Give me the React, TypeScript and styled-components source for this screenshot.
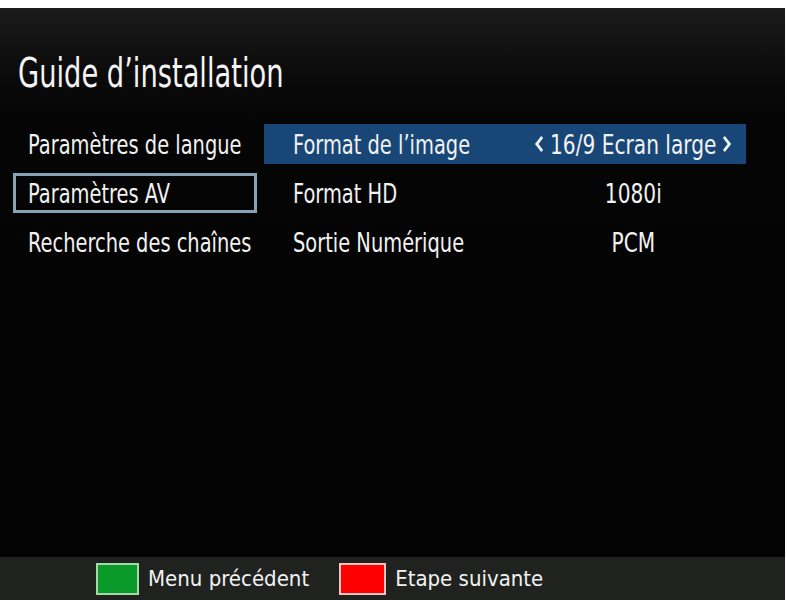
import React from "react";
import styled, { createGlobalStyle } from "styled-components";

const GlobalStyle = createGlobalStyle`
  html, body {
    margin: 0;
    padding: 0;
    background: #ffffff;
  }
  body {
    font-family: "DejaVu Sans Condensed", "DejaVu Sans", sans-serif;
    font-stretch: condensed;
  }
`;

const Screen = styled.div`
  margin-top: 8px;
  width: 785px;
  height: 592px;
  display: flex;
  flex-direction: column;
  background: linear-gradient(180deg, #1b1b1b 0px, #0d0d0d 55px, #050505 110px, #030303 100%);
  color: #f2f2f2;
`;

const Header = styled.div`
  height: 116px;
  box-sizing: border-box;
  padding: 45px 0 0 18px;
`;

// the set-top box font is much narrower than anything installed, so text is squeezed
const Squeeze = styled.span<{ $scale: number; $origin?: string }>`
  display: inline-block;
  white-space: nowrap;
  transform: scaleX(${(p) => p.$scale});
  transform-origin: ${(p) => p.$origin ?? "left"} center;
`;

const Title = styled.h1`
  margin: 0;
  font-weight: normal;
  font-size: 41px;
  line-height: 41px;
  color: #f4f4f4;
`;

const Content = styled.div`
  flex: 1;
  display: grid;
  grid-template-columns: 244px 482px;
  column-gap: 7px;
  padding-left: 13px;
  align-items: start;
`;

const Column = styled.div`
  display: flex;
  flex-direction: column;
  row-gap: 9px;
`;

const MenuItem = styled.div<{ $focused?: boolean }>`
  height: 40px;
  box-sizing: border-box;
  display: flex;
  align-items: center;
  padding-left: ${(p) => (p.$focused ? "12px" : "15px")};
  border: ${(p) => (p.$focused ? "3px solid #8aa3b4" : "none")};
  font-size: 27px;
`;

const SettingRow = styled.div<{ $selected?: boolean }>`
  height: 40px;
  display: grid;
  grid-template-columns: 256px minmax(0, 1fr);
  align-items: center;
  background: ${(p) => (p.$selected ? "#184777" : "transparent")};
  font-size: 27px;
`;

const Label = styled.div`
  padding-left: 29px;
`;

const Value = styled.div`
  display: flex;
  justify-content: center;
`;

const ValueInner = styled.span`
  display: inline-flex;
  align-items: center;
  column-gap: 6px;
`;

const Footer = styled.div`
  height: 43px;
  background: #1f221f;
  display: flex;
  align-items: center;
  padding-left: 96px;
  column-gap: 30px;
`;

const Key = styled.div`
  display: flex;
  align-items: center;
  column-gap: 9px;
  font-size: 22px;
`;

const ColorBox = styled.div<{ $fill: string; $edge: string; $w: number }>`
  width: ${(p) => p.$w}px;
  height: 32px;
  box-sizing: border-box;
  background: ${(p) => p.$fill};
  border: 2px solid ${(p) => p.$edge};
`;

const Chevron = ({ dir }: { dir: "left" | "right" }) => (
  <svg width="14" height="18" viewBox="0 0 14 18">
    <path
      d={dir === "left" ? "M10.5 2 L4 9 L10.5 16" : "M3.5 2 L10 9 L3.5 16"}
      fill="none"
      stroke="#f2f2f2"
      strokeWidth="3.2"
    />
  </svg>
);

const menu = ["Paramètres de langue", "Paramètres AV", "Recherche des chaînes"];

const settings = [
  { label: "Format de l’image", value: "16/9 Ecran large", arrows: true },
  { label: "Format HD", value: "1080i", arrows: false },
  { label: "Sortie Numérique", value: "PCM", arrows: false },
];

export default function App() {
  return (
    <>
      <GlobalStyle />
      <Screen>
        <Header>
          <Title>
            <Squeeze $scale={0.74}>Guide d’installation</Squeeze>
          </Title>
        </Header>
        <Content>
          <Column>
            {menu.map((item, index) => (
              <MenuItem key={item} $focused={index === 1}>
                <Squeeze $scale={0.8}>{item}</Squeeze>
              </MenuItem>
            ))}
          </Column>
          <Column>
            {settings.map((s, index) => (
              <SettingRow key={s.label} $selected={index === 0}>
                <Label>
                  <Squeeze $scale={0.8}>{s.label}</Squeeze>
                </Label>
                <Value>
                  <Squeeze $scale={0.83} $origin="center">
                    <ValueInner>
                      {s.arrows && <Chevron dir="left" />}
                      {s.value}
                      {s.arrows && <Chevron dir="right" />}
                    </ValueInner>
                  </Squeeze>
                </Value>
              </SettingRow>
            ))}
          </Column>
        </Content>
        <Footer>
          <Key>
            <ColorBox $w={43} $fill="#0a9a2a" $edge="#a8d8a8" />
            Menu précédent
          </Key>
          <Key>
            <ColorBox $w={47} $fill="#ff0000" $edge="#f2c4c0" />
            Etape suivante
          </Key>
        </Footer>
      </Screen>
    </>
  );
}
